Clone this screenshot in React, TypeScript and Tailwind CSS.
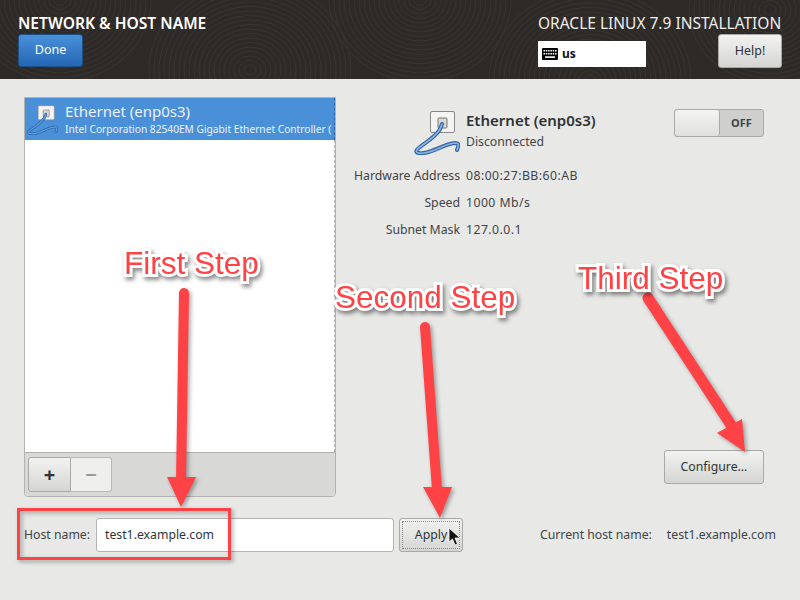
import type { ReactNode } from "react";

const UI_FONT = "font-['Noto_Sans',sans-serif]";

// Concentric arcs behind the header, standing in for the wood grain texture
const GRAIN = [
  { cx: 60, cy: 0, n: 18 },
  { cx: 250, cy: 70, n: 20 },
  { cx: 420, cy: 0, n: 18 },
  { cx: 590, cy: 80, n: 20 },
  { cx: 770, cy: 10, n: 16 },
];

function HeaderGrain() {
  return (
    <svg className="absolute inset-0" width="800" height="79" fill="none" stroke="#38342f" strokeWidth="1">
      {GRAIN.map((g) =>
        Array.from({ length: g.n }, (_, i) => (
          <ellipse key={`${g.cx}-${i}`} cx={g.cx} cy={g.cy} rx={6 + i * 5} ry={5 + i * 4.5} />
        ))
      )}
    </svg>
  );
}

function KeyboardIcon() {
  return (
    <svg width="16" height="12" viewBox="0 0 16 12">
      <rect width="16" height="12" rx="1" fill="#000" />
      <g fill="#fff">
        {[1.5, 3.8, 6.1, 8.4, 10.7, 13].map((x) => (
          <rect key={x} x={x} y="2" width="1.5" height="1.5" />
        ))}
        {[1.5, 3.8, 6.1, 8.4, 10.7, 13].map((x) => (
          <rect key={x} x={x} y="5" width="1.5" height="1.5" />
        ))}
        <rect x="3" y="8.3" width="10" height="1.6" />
      </g>
    </svg>
  );
}

function CableIcon({ size, faded = false }: { size: number; faded?: boolean }) {
  const outer = faded ? "#2f6cae" : "#3465a4";
  const inner = faded ? "#6a9fd8" : "#8bb4e4";
  return (
    <svg width={size} height={size} viewBox="0 0 46 46" fill="none">
      <rect x="16.5" y="2.5" width="24" height="21" rx="1.5" fill="#f4f4f2" stroke="#8a8a88" />
      <rect x="24" y="9" width="9" height="10" rx="1" fill="#d8d8d6" stroke="#77777a" />
      <path d="M28 15C26 24 17 30 6 38C-1 43 3 45 10 44C20 43 30 35 41 34C45 34 45 36 43 41" stroke={outer} strokeWidth="4" strokeLinecap="round" />
      <path d="M28 15C26 24 17 30 6 38C-1 43 3 45 10 44C20 43 30 35 41 34C45 34 45 36 43 41" stroke={inner} strokeWidth="1.6" strokeLinecap="round" />
    </svg>
  );
}

function GreyButton({ className, children }: { className: string; children: ReactNode }) {
  return (
    <div className={`flex items-center justify-center rounded-[3px] border border-[#a9a9a7] bg-linear-to-b from-[#f2f2f0] to-[#d5d5d3] text-[#2e3436] ${className}`}>
      {children}
    </div>
  );
}

function InfoRow({ label, value }: { label: string; value: string }) {
  return (
    <div className="flex h-[27px] items-center whitespace-nowrap text-[12.25px] text-[#3f4446]">
      <span className="w-[106px] text-right">{label}</span>
      <span className="ml-[6px] tracking-[0.45px]">{value}</span>
    </div>
  );
}

// Everything the screenshot's author painted over the window
const STEP_TEXT =
  "absolute font-['Liberation_Sans',sans-serif] text-[31.5px] leading-none whitespace-nowrap text-[#ff4245] [-webkit-text-stroke:6px_white] [paint-order:stroke_fill] drop-shadow-[2px_3px_2px_rgba(0,0,0,0.45)]";

function Annotations() {
  return (
    <>
      <svg className="absolute inset-0 drop-shadow-[2px_2px_2px_rgba(0,0,0,0.35)]" width="800" height="600" fill="#ff4245" stroke="none">
        <path d="M184 293L181 480" stroke="#ff4245" strokeWidth="10" strokeLinecap="round" />
        <path d="M167 477L196 477L181 507Z" />
        <path d="M425 327L437 490" stroke="#ff4245" strokeWidth="10" strokeLinecap="round" />
        <path d="M423 487L452 487L440 518Z" />
        <path d="M648 298L733 428" stroke="#ff4245" strokeWidth="11" strokeLinecap="round" />
        <path d="M717 433L742 419L745 452Z" />
        <rect x="18.5" y="509.5" width="211" height="49" fill="none" stroke="#ff4245" strokeWidth="3" />
      </svg>
      <span className={`${STEP_TEXT} left-[124px] top-[248px]`}>First Step</span>
      <span className={`${STEP_TEXT} left-[335px] top-[282px]`}>Second Step</span>
      <span className={`${STEP_TEXT} left-[578px] top-[263px]`}>Third Step</span>
      <svg className="absolute left-[448px] top-[527px]" width="13" height="20" viewBox="0 0 13 20">
        <path d="M1 1L1 15L4.5 12L7 18L9.5 17L7 11L12 11Z" fill="#111" stroke="#fff" strokeWidth="0.8" />
      </svg>
    </>
  );
}

export default function App() {
  return (
    <div className={`relative h-[600px] w-[800px] overflow-hidden bg-[#e8e8e7] ${UI_FONT}`}>
      <header className="relative flex h-[79px] justify-between bg-[#2e2a27] pl-[18px] pr-[18px] pt-[13px]">
        <HeaderGrain />
        <div className="relative">
          <div className="h-[21px] text-[15.6px] font-semibold leading-[20px] text-white">NETWORK &amp; HOST NAME</div>
          <div className="flex h-[33px] w-[65px] items-center justify-center rounded-[3px] border border-[#1c5187] bg-linear-to-b from-[#4a90d9] to-[#2467b5] text-[12.5px] text-white">
            Done
          </div>
        </div>
        <div className="relative w-[244px]">
          <div className="h-[21px] whitespace-nowrap text-[15.5px] leading-[20px] text-[#eeeeec]">ORACLE LINUX 7.9 INSTALLATION</div>
          <div className="flex items-start justify-between">
            <div className="mt-[7px] flex h-[26px] w-[108px] items-center gap-[4px] bg-white pl-[4px] text-[12px] font-bold text-[#111]">
              <KeyboardIcon />
              us
            </div>
            <GreyButton className="h-[34px] w-[64px] text-[12.5px]">Help!</GreyButton>
          </div>
        </div>
      </header>

      <main className="flex pl-[24px] pt-[18px]">
        <section className="flex h-[400px] w-[312px] flex-col overflow-hidden rounded-b-[4px] border border-[#b2b2b0] bg-white">
          <div className="flex h-[42px] items-center whitespace-nowrap border-r border-dashed border-r-[#2e62a0] bg-[#4a90d9] text-[#eaf2fb]">
            <div className="ml-[2px] mr-[7px] shrink-0">
              <CableIcon size={31} faded />
            </div>
            <div>
              <div className="-mt-[1px] text-[15px] leading-[19px]">Ethernet (enp0s3)</div>
              <div className="translate-y-[1px] text-[10.2px] leading-[15px]">Intel Corporation 82540EM Gigabit Ethernet Controller (</div>
            </div>
          </div>
          <div className="flex-1 border-r border-dashed border-r-[#b8b8b6]" />
          <div className="flex h-[44px] items-center border-t border-[#b2b2b0] bg-[#d8d8d6] pl-[3px]">
            <GreyButton className="h-[35px] w-[43px] rounded-r-none text-[20px] font-bold leading-none">+</GreyButton>
            <div className="flex h-[35px] w-[41px] items-center justify-center rounded-r-[3px] border border-l-0 border-[#b9b9b7] bg-[#efefee] text-[20px] font-bold leading-none text-[#9a9a98]">
              −
            </div>
          </div>
        </section>

        <section className="flex h-[400px] flex-1 flex-col pl-[18px] pr-[36px]">
          <div className="flex items-start pl-[60px] pt-[12px]">
            <CableIcon size={46} />
            <div className="ml-[6px]">
              <div className="text-[15px] font-semibold leading-[22px] text-[#2e3436]">Ethernet (enp0s3)</div>
              <div className="text-[12.25px] leading-[22px] text-[#3f4446]">Disconnected</div>
            </div>
            <div className="ml-auto flex h-[28px] w-[90px] rounded-[3px] border border-[#a9a9a7] bg-[#cfcfcd]">
              <div className="h-full w-[45px] rounded-[3px] border-r border-[#a9a9a7] bg-linear-to-b from-[#f4f4f2] to-[#dfdfdd]" />
              <div className="flex flex-1 items-center justify-center text-[11px] font-bold text-[#3f4446]">OFF</div>
            </div>
          </div>
          <div className="pt-[8px]">
            <InfoRow label="Hardware Address" value="08:00:27:BB:60:AB" />
            <InfoRow label="Speed" value="1000 Mb/s" />
            <InfoRow label="Subnet Mask" value="127.0.0.1" />
          </div>
          <div className="mt-auto mb-[13px] flex justify-end">
            <GreyButton className="h-[34px] w-[100px] text-[12.25px]">Configure...</GreyButton>
          </div>
        </section>
      </main>

      <footer className="mt-[21px] flex h-[34px] items-center pl-[24px] text-[12.25px] text-[#3f4446]">
        <span className="w-[72px] whitespace-nowrap">Host name:</span>
        <div className="flex h-[34px] w-[298px] items-center rounded-[3px] border border-[#b2b2b0] bg-white pl-[8px] text-[#2e3436]">
          test1.example.com
        </div>
        <GreyButton className="ml-[5px] h-[34px] w-[64px] p-[2px]">
          <div className="flex h-full w-full items-center justify-center border border-dotted border-[#8a8a88]">Apply</div>
        </GreyButton>
        <span className="ml-[77px]">Current host name:</span>
        <span className="ml-[15px]">test1.example.com</span>
      </footer>

      <Annotations />
    </div>
  );
}
